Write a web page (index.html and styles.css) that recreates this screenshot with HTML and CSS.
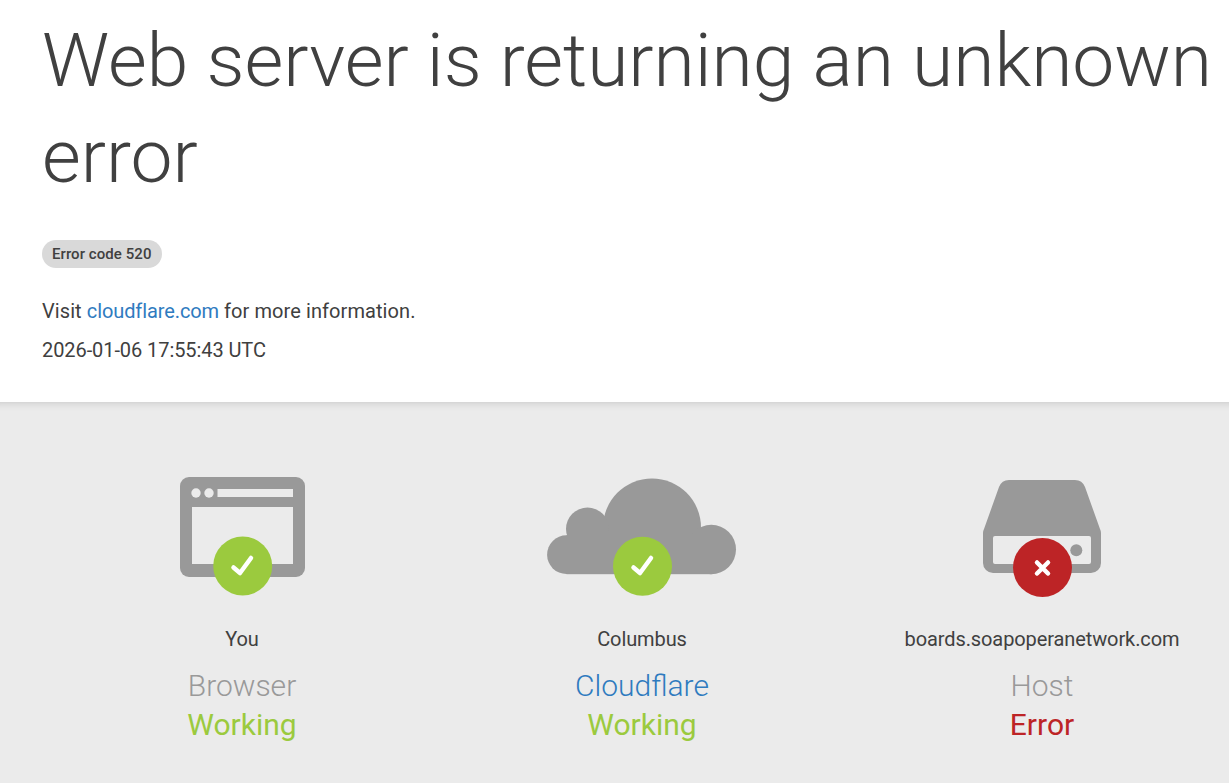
FILE: index.html
```html
<!DOCTYPE html>
<html lang="en">
<head>
<meta charset="utf-8">
<title>Web server is returning an unknown error</title>
<link rel="stylesheet" href="styles.css">
</head>
<body>
<header class="top">
  <h1 class="title">Web server is returning an unknown error</h1>
  <span class="code">Error code 520</span>
  <p class="visit">Visit <a class="link" href="#">cloudflare.com</a> for more information.</p>
  <p class="time">2026-01-06 17:55:43 UTC</p>
</header>
<section class="status">
  <div class="col">
    <svg class="icon" width="400" height="130" viewBox="42 472 400 130">
      <rect x="180" y="477" width="125" height="100" rx="9" fill="#999"/>
      <rect x="192" y="507" width="101" height="57" fill="#ebebeb"/>
      <rect x="217.500" y="489" width="75.500" height="8" fill="#ebebeb"/>
      <circle cx="196" cy="493" r="4.7" fill="#ebebeb"/>
      <circle cx="209" cy="493" r="4.7" fill="#ebebeb"/>
      <circle cx="242.700" cy="566" r="29.500" fill="#9bca3e"/>
      <path d="M233.500 567.500l6.500 5.500 11-15" fill="none" stroke="#fff" stroke-width="4.500" stroke-linecap="round" stroke-linejoin="round"/>
    </svg>
    <p class="place">You</p>
    <p class="name">Browser</p>
    <p class="state ok">Working</p>
  </div>
  <div class="col">
    <svg class="icon" width="400" height="130" viewBox="442 472 400 130">
      <g fill="#999">
        <circle cx="652" cy="527.500" r="49"/>
        <circle cx="587.500" cy="529" r="21.500"/>
        <circle cx="566.500" cy="554.700" r="19.400"/>
        <circle cx="711.300" cy="549.500" r="24.700"/>
        <rect x="566.500" y="535" width="145" height="39.200"/>
      </g>
      <circle cx="642.500" cy="566.300" r="29.500" fill="#9bca3e"/>
      <path d="M633.500 567.500l6.500 5.500 11-15" fill="none" stroke="#fff" stroke-width="4.500" stroke-linecap="round" stroke-linejoin="round"/>
    </svg>
    <p class="place">Columbus</p>
    <p class="name link">Cloudflare</p>
    <p class="state ok">Working</p>
  </div>
  <div class="col">
    <svg class="icon" width="400" height="130" viewBox="842 472 400 130">
      <path d="M1009 480h66a11 11 0 0 1 10 7l15 42a9 9 0 0 1 1 5v29a10 10 0 0 1-10 10h-98a10 10 0 0 1-10-10v-29a9 9 0 0 1 1-5l15-42a11 11 0 0 1 10-7z" fill="#999"/>
      <rect x="993" y="536" width="98" height="28" rx="2" fill="#ebebeb"/>
      <circle cx="1076.300" cy="550.300" r="6" fill="#999"/>
      <circle cx="1042.500" cy="567.500" r="29.500" fill="#bd2426"/>
      <path d="M1037 562.500l11 11m0-11l-11 11" fill="none" stroke="#fff" stroke-width="4.500" stroke-linecap="round"/>
    </svg>
    <p class="place">boards.soapoperanetwork.com</p>
    <p class="name">Host</p>
    <p class="state bad">Error</p>
  </div>
</section>
</body>
</html>
```
FILE: styles.css
```css
* { box-sizing: border-box; }
html, body { margin: 0; height: 100%; }
body {
  display: flex;
  flex-direction: column;
  min-height: 783px;
  overflow: hidden;
  background: #fff;
  color: #404040;
  font-family: Roboto, "Liberation Sans", sans-serif;
  font-size: 20px;
}
.top { padding: 12px 0 0 42px; height: 402px; }
.title {
  margin: 0 0 36px;
  font-size: 75px;
  font-weight: 300;
  line-height: 96px;
  letter-spacing: -0.05px;
}
.code {
  display: inline-block;
  height: 28px;
  padding: 0 10px;
  border-radius: 14px;
  background: #d9d9d9;
  font-size: 15px;
  font-weight: 500;
  line-height: 28px;
  letter-spacing: 0.07px;
}
.visit { margin: 30px 0 0; line-height: 27px; letter-spacing: 0.08px; }
.time { margin: 12px 0 0; line-height: 27px; letter-spacing: -0.08px; }
.link { color: #2f7bbf; text-decoration: none; }
.visit .link { letter-spacing: -0.1px; }
.status {
  flex: 1;
  display: grid;
  grid-template-columns: repeat(3, 400px);
  padding: 70px 0 0 42px;
  background: #ebebeb;
  box-shadow: inset 0 10px 10px -10px rgba(0, 0, 0, 0.18);
}
.col { text-align: center; }
.icon { display: block; }
.place { margin: 24px 0 0; font-size: 20px; line-height: 27px; letter-spacing: -0.1px; }
.name { margin: 15px 0 0; font-size: 30px; font-weight: 300; line-height: 36px; color: #999; }
.name.link { color: #2f7bbf; }
.state { margin: 3px 0 0; font-size: 30px; line-height: 36px; }
.ok { color: #9bca3e; }
.bad { color: #bd2426; }
```
